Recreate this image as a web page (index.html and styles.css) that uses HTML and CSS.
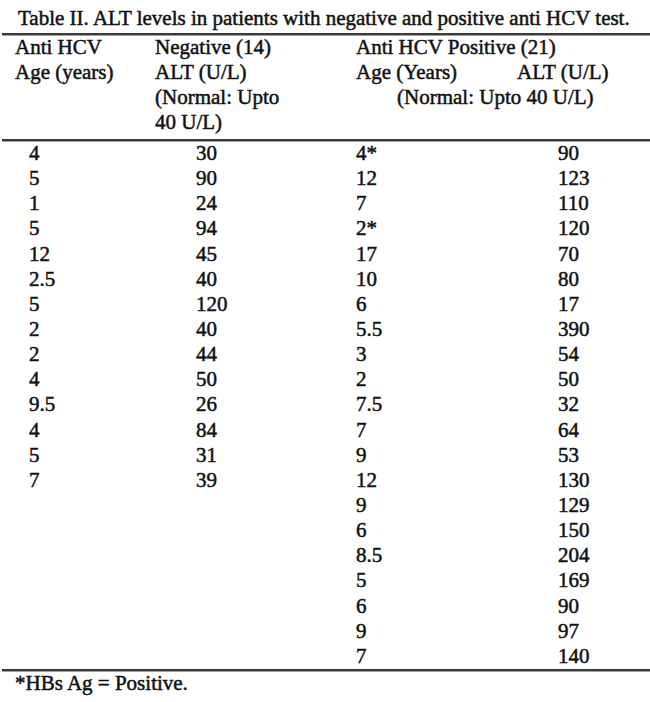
FILE: index.html
```html
<!DOCTYPE html>
<html lang="en">
<head>
<meta charset="utf-8">
<title>Table II</title>
<link rel="stylesheet" href="styles.css">
</head>
<body>
<div class="page">
  <h1 class="caption">Table II. ALT levels in patients with negative and positive anti HCV test.</h1>
  <div class="rule"></div>
  <div class="head">
    <div class="hc1">Anti HCV<br>Age (years)</div>
    <div class="hc2">Negative (14)<br>ALT (U/L)<br>(Normal: Upto<br>40 U/L)</div>
    <div class="hc34">
      <div>Anti HCV Positive (21)</div>
      <div class="sub"><span>Age (Years)</span><span>ALT (U/L)</span></div>
      <div class="normal">(Normal: Upto 40 U/L)</div>
    </div>
  </div>
  <div class="rule"></div>
  <div class="rows">
    <span class="c1">4</span><span class="c2">30</span><span class="c3">4*</span><span class="c4">90</span>
    <span class="c1">5</span><span class="c2">90</span><span class="c3">12</span><span class="c4">123</span>
    <span class="c1">1</span><span class="c2">24</span><span class="c3">7</span><span class="c4">110</span>
    <span class="c1">5</span><span class="c2">94</span><span class="c3">2*</span><span class="c4">120</span>
    <span class="c1">12</span><span class="c2">45</span><span class="c3">17</span><span class="c4">70</span>
    <span class="c1">2.5</span><span class="c2">40</span><span class="c3">10</span><span class="c4">80</span>
    <span class="c1">5</span><span class="c2">120</span><span class="c3">6</span><span class="c4">17</span>
    <span class="c1">2</span><span class="c2">40</span><span class="c3">5.5</span><span class="c4">390</span>
    <span class="c1">2</span><span class="c2">44</span><span class="c3">3</span><span class="c4">54</span>
    <span class="c1">4</span><span class="c2">50</span><span class="c3">2</span><span class="c4">50</span>
    <span class="c1">9.5</span><span class="c2">26</span><span class="c3">7.5</span><span class="c4">32</span>
    <span class="c1">4</span><span class="c2">84</span><span class="c3">7</span><span class="c4">64</span>
    <span class="c1">5</span><span class="c2">31</span><span class="c3">9</span><span class="c4">53</span>
    <span class="c1">7</span><span class="c2">39</span><span class="c3">12</span><span class="c4">130</span>
    <span class="c1"></span><span class="c2"></span><span class="c3">9</span><span class="c4">129</span>
    <span class="c1"></span><span class="c2"></span><span class="c3">6</span><span class="c4">150</span>
    <span class="c1"></span><span class="c2"></span><span class="c3">8.5</span><span class="c4">204</span>
    <span class="c1"></span><span class="c2"></span><span class="c3">5</span><span class="c4">169</span>
    <span class="c1"></span><span class="c2"></span><span class="c3">6</span><span class="c4">90</span>
    <span class="c1"></span><span class="c2"></span><span class="c3">9</span><span class="c4">97</span>
    <span class="c1"></span><span class="c2"></span><span class="c3">7</span><span class="c4">140</span>
  </div>
  <div class="rule"></div>
  <p class="foot">*HBs Ag = Positive.</p>
</div>
</body>
</html>
```
FILE: styles.css
```css
html, body {
  margin: 0;
  padding: 0;
  background: #ffffff;
}

body {
  font-family: "Liberation Serif", "Times New Roman", serif;
  font-size: 21px;
  color: #111111;
  -webkit-text-stroke: 0.5px #111111;
}

.page {
  width: 650px;
  padding-top: 6px;
}

.caption {
  margin: 0;
  padding-left: 18px;
  font-size: 21px;
  font-weight: normal;
  line-height: 25px;
  white-space: nowrap;
}

.rule {
  height: 2px;
  margin-left: 2px;
  background: #3a3a3a;
  box-shadow: 0 1px 0 #a0a0a0;
}

.caption + .rule {
  margin-top: 2px;
}

.head {
  display: grid;
  grid-template-columns: 155px 201px 1fr;
  line-height: 25px;
  padding-bottom: 4px;
}

.hc1 {
  padding-left: 15px;
}

.sub {
  display: grid;
  grid-template-columns: 161px 1fr;
}

.normal {
  padding-left: 41px;
}

.rows {
  display: grid;
  grid-template-columns: 155px 201px 161px 1fr;
  grid-auto-rows: 25.15px;
  line-height: 25.15px;
}

.c1 {
  padding-left: 29px;
}

.c2 {
  padding-left: 41px;
}

.c4 {
  padding-left: 41px;
}

.foot {
  margin: 0;
  padding-left: 15px;
  line-height: 25px;
}
```
